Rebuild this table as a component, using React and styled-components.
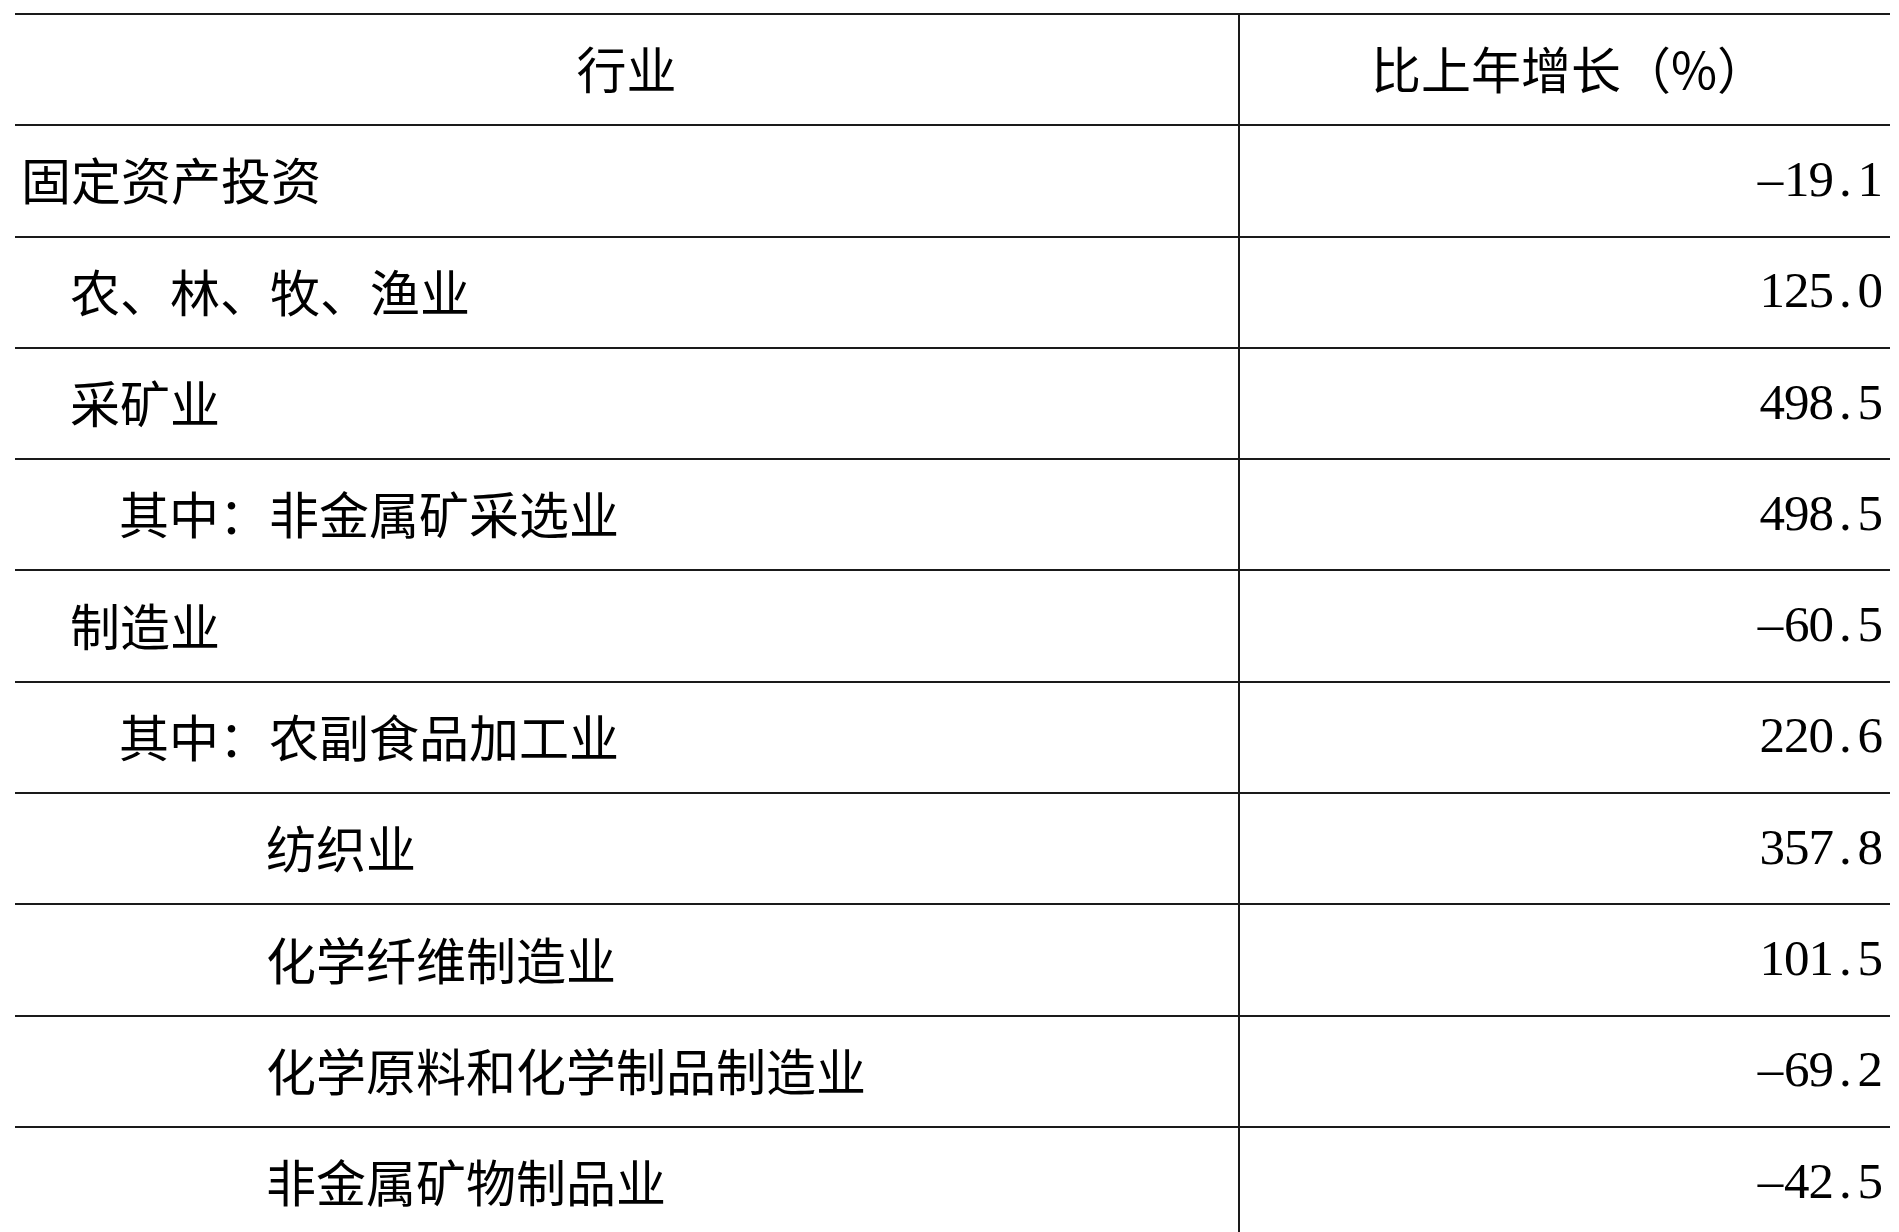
import React from 'react'
import styled, { createGlobalStyle } from 'styled-components'

const GlobalStyle = createGlobalStyle`
  html, body {
    margin: 0;
    padding: 0;
    background: #fff;
  }
  body {
    width: 1899px;
    height: 1232px;
    overflow: hidden;
    font-family: "Noto Sans CJK SC", "Noto Sans", sans-serif;
    color: #000;
  }
`

const rows = [
  { name: '固定资产投资', level: 0, value: '-19.1' },
  { name: '农、林、牧、渔业', level: 1, value: '125.0' },
  { name: '采矿业', level: 1, value: '498.5' },
  { name: '其中：非金属矿采选业', level: 2, value: '498.5' },
  { name: '制造业', level: 1, value: '-60.5' },
  { name: '其中：农副食品加工业', level: 2, value: '220.6' },
  { name: '纺织业', level: 5, value: '357.8' },
  { name: '化学纤维制造业', level: 5, value: '101.5' },
  { name: '化学原料和化学制品制造业', level: 5, value: '-69.2' },
  { name: '非金属矿物制品业', level: 5, value: '-42.5' },
]

export default function App() {
  return (
    <>
      <GlobalStyle />
      <Table>
        <Row>
          <HeadCell>行业</HeadCell>
          <HeadCell divider>比上年增长（%）</HeadCell>
        </Row>
        {rows.map((r, i) => (
          <Row key={i}>
            <NameCell level={r.level}>{r.name}</NameCell>
            <ValueCell>
              {r.value.split('').map((c, j) =>
                c === '-' ? (
                  <Glyph key={j} wide>–</Glyph>
                ) : (
                  <Glyph key={j}>{c}</Glyph>
                )
              )}
            </ValueCell>
          </Row>
        ))}
      </Table>
    </>
  )
}

const Table = styled.div`
  margin: 13px 9px 0 15px;
  width: 1875px;
  border-top: 2px solid #1a1a1a;
`

const Row = styled.div`
  display: grid;
  grid-template-columns: 1223px 1fr;
  height: 109.3px;
  border-bottom: 2px solid #1a1a1a;
`

const Cell = styled.div`
  display: flex;
  align-items: center;
  font-size: 50px;
  line-height: 1;
  white-space: nowrap;
  padding-bottom: 5px;
  box-sizing: border-box;
`

const HeadCell = styled(Cell)`
  justify-content: center;
  border-left: ${p => (p.divider ? '2px solid #1a1a1a' : 'none')};
  padding-left: ${p => (p.divider ? '8px' : '0')};
`

const NameCell = styled(Cell)`
  padding-left: ${p => 6 + p.level * 49}px;
`

const ValueCell = styled(Cell)`
  justify-content: flex-end;
  border-left: 2px solid #1a1a1a;
  padding-right: 8px;
  padding-bottom: 3px;
  font-family: "Liberation Serif", "DejaVu Serif", serif;
  font-size: 51px;
`

const Glyph = styled.span`
  display: inline-block;
  width: ${p => (p.wide ? '27px' : '24.5px')};
  text-align: center;
`
